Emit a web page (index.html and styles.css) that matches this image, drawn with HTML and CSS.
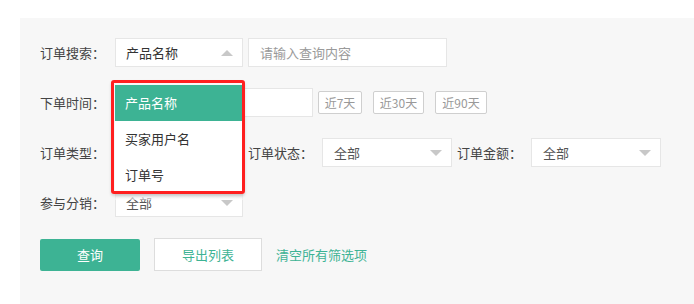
FILE: index.html
```html
<!DOCTYPE html>
<html lang="zh-CN">
<head>
  <meta charset="UTF-8" />
  <title>订单筛选</title>
  <link rel="stylesheet" href="styles.css">
</head>
<body>
  <div class="filter-panel">

    <div class="filter-row">
      <span class="filter-label">订单搜索：</span>
      <div class="select-box open">
        <span class="select-text dark">产品名称</span>
        <i class="arrow up"></i>
        <!-- dropdown, annotated with a red box -->
        <div class="mark-box">
          <ul class="dropdown">
            <li class="active">产品名称</li>
            <li>买家用户名</li>
            <li>订单号</li>
          </ul>
        </div>
        <div class="mark-fade"></div>
      </div>
      <input class="text-input search-input" type="text" placeholder="请输入查询内容" />
    </div>

    <div class="filter-row">
      <span class="filter-label">下单时间：</span>
      <input class="text-input date-input" type="text" />
      <button class="day-btn first">近7天</button>
      <button class="day-btn">近30天</button>
      <button class="day-btn">近90天</button>
    </div>

    <div class="filter-row">
      <span class="filter-label">订单类型：</span>
      <div class="select-box">
        <span class="select-text">全部</span>
        <i class="arrow"></i>
      </div>
      <span class="filter-label inline">订单状态：</span>
      <div class="select-box wide">
        <span class="select-text">全部</span>
        <i class="arrow"></i>
      </div>
      <span class="filter-label inline">订单金额：</span>
      <div class="select-box wide">
        <span class="select-text">全部</span>
        <i class="arrow"></i>
      </div>
    </div>

    <div class="filter-row">
      <span class="filter-label">参与分销：</span>
      <div class="select-box">
        <span class="select-text">全部</span>
        <i class="arrow"></i>
      </div>
    </div>

    <div class="action-row">
      <button class="btn-primary">查询</button>
      <button class="btn-outline">导出列表</button>
      <a class="clear-link" href="#">清空所有筛选项</a>
    </div>

  </div>
</body>
</html>
```

FILE: styles.css
```css
body {
  margin: 0;
  background: #fff;
  font-family: "Noto Sans CJK SC", "Noto Sans", sans-serif;
  font-size: 13px;
  color: #333;
}
.filter-panel {
  margin: 18px 0 0 20px;
  padding: 20px 20px 34px;
  background: #f7f7f7;
}
.filter-row {
  display: flex;
  align-items: center;
  height: 29px;
  margin-bottom: 21px;
}
.filter-label {
  width: 75px;
  color: #444;
  flex-shrink: 0;
}
.filter-label.inline {
  width: 74px;
  margin-left: 5px;
}
.select-box {
  position: relative;
  width: 128px;
  height: 29px;
  box-sizing: border-box;
  border: 1px solid #e6e6e6;
  background: #fff;
  display: flex;
  align-items: center;
  padding-left: 10px;
  flex-shrink: 0;
}
.select-box.wide {
  width: 130px;
}
.select-box.wide .select-text {
  margin-left: 1px;
}
.select-text {
  color: #555;
}
.select-text.dark {
  color: #333;
}
.arrow {
  position: absolute;
  right: 9px;
  top: 11px;
  width: 0;
  height: 0;
  border-left: 6px solid transparent;
  border-right: 6px solid transparent;
  border-top: 6px solid #c8c8c8;
}
.arrow.up {
  border-top: none;
  border-bottom: 6px solid #c8c8c8;
}
.mark-box {
  position: absolute;
  left: -5px;
  top: 41px;
  width: 134px;
  height: 114px;
  box-sizing: border-box;
  border: 3px solid #ff1f1f;
  border-radius: 3px;
  overflow: hidden;
  z-index: 5;
  box-shadow: 0 2px 3px rgba(0, 0, 0, 0.15);
}
/* bottom edge of the real dropdown, showing below the red box */
.mark-fade {
  position: absolute;
  left: -1px;
  top: 155px;
  width: 128px;
  height: 6px;
  background: linear-gradient(rgba(230, 230, 230, 0.9), rgba(255, 255, 255, 0.5));
  z-index: 4;
}
.dropdown {
  list-style: none;
  margin: 2px 0 0 1px;
  padding: 0;
  background: #fff;
}
.dropdown li {
  height: 36px;
  line-height: 36px;
  padding-left: 10px;
  color: #333;
}
.dropdown li.active {
  background: #3db394;
  color: #fff;
}
.text-input {
  height: 29px;
  box-sizing: border-box;
  border: 1px solid #e6e6e6;
  background: #fff;
  font-family: inherit;
  font-size: 13px;
  padding: 0 11px;
  outline: none;
}
.text-input::placeholder {
  color: #9a9a9a;
}
.search-input {
  width: 199px;
  margin-left: 5px;
}
.date-input {
  width: 198px;
}
.day-btn {
  width: 51px;
  height: 23px;
  margin-left: 11px;
  padding: 0;
  border: 1px solid #cfcfcf;
  background: #fff;
  color: #999;
  font-family: inherit;
  font-size: 12px;
  border-radius: 2px;
  cursor: pointer;
}
.day-btn.first {
  width: 44px;
  margin-left: 5px;
}
.day-btn:last-child {
  width: 52px;
}
.action-row {
  display: flex;
  align-items: center;
}
.btn-primary {
  width: 100px;
  height: 32px;
  border: none;
  border-radius: 2px;
  background: #3db394;
  color: #fff;
  font-family: inherit;
  font-size: 13px;
  cursor: pointer;
}
.btn-outline {
  width: 108px;
  height: 33px;
  margin-left: 14px;
  border: 1px solid #ddd;
  background: #fff;
  color: #3db394;
  font-family: inherit;
  font-size: 13px;
  cursor: pointer;
}
.clear-link {
  margin-left: 14px;
  color: #3db394;
  text-decoration: none;
}
```
